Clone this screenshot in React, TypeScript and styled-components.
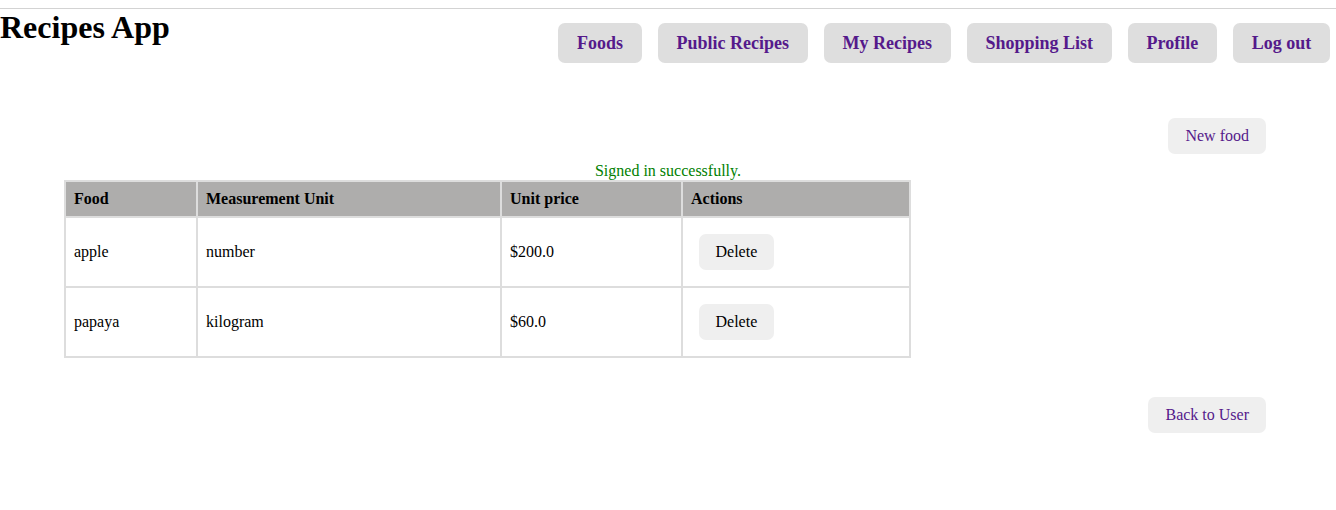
import styled, { createGlobalStyle } from 'styled-components';

const GlobalStyle = createGlobalStyle`
  body {
    margin: 0;
    font-family: 'Liberation Serif', 'Times New Roman', serif;
    font-size: 16px;
    color: #000;
    background: #fff;
  }
`;

const Header = styled.header`
  margin-top: 8px;
  border-top: 1px solid #d3d3d3;
  display: flex;
  justify-content: space-between;
  align-items: flex-start;
`;

const Title = styled.h1`
  margin: 0;
  font-size: 32px;
  font-weight: bold;
`;

const Nav = styled.nav`
  display: flex;
  gap: 16px;
  padding: 14px 6px 0 0;
`;

const NavLink = styled.a`
  display: flex;
  align-items: center;
  height: 40px;
  padding: 0 18.75px;
  border-radius: 7px;
  background: #dedede;
  color: #551a8b;
  font-size: 18px;
  font-weight: bold;
  text-decoration: none;
`;

const Main = styled.main`
  padding: 55px 70px 0 64px;
  display: flex;
  flex-direction: column;
`;

const ActionRow = styled.div`
  display: flex;
  justify-content: flex-end;
  margin-top: ${p => p.$top || 0}px;
`;

const LinkButton = styled.a`
  display: flex;
  align-items: center;
  height: 36px;
  padding: 0 17px;
  border-radius: 7px;
  background: #efefef;
  color: #551a8b;
  text-decoration: none;
`;

const Notice = styled.p`
  margin: 8px -70px 0 -64px;
  text-align: center;
  color: #008000;
  line-height: 18px;
`;

const Table = styled.table`
  width: 847px;
  table-layout: fixed;
  border-collapse: collapse;
  border: 2px solid #dddddd;
`;

const HeadCell = styled.th`
  background: #aeadac;
  border: 2px solid #dddddd;
  padding: 8px 8px;
  text-align: left;
  font-weight: bold;
  line-height: 18px;
`;

const Cell = styled.td`
  border: 2px solid #dddddd;
  padding: 16px 8px;
  line-height: 18px;
  height: 36px;
`;

const DeleteButton = styled.button`
  height: 36px;
  margin-left: 8px;
  padding: 0 16.5px;
  border: none;
  border-radius: 7px;
  background: #efefef;
  font-family: inherit;
  font-size: 16px;
  color: #000;
`;

const foods = [
  { name: 'apple', unit: 'number', price: '$200.0' },
  { name: 'papaya', unit: 'kilogram', price: '$60.0' },
];

const navItems = ['Foods', 'Public Recipes', 'My Recipes', 'Shopping List', 'Profile', 'Log out'];

export default function App() {
  return (
    <>
      <GlobalStyle />
      <Header>
        <Title>Recipes App</Title>
        <Nav>
          {navItems.map(item => (
            <NavLink key={item} href='#'>
              {item}
            </NavLink>
          ))}
        </Nav>
      </Header>
      <Main>
        <ActionRow>
          <LinkButton href='#'>New food</LinkButton>
        </ActionRow>
        <Notice>Signed in successfully.</Notice>
        <Table>
          <colgroup>
            <col style={{ width: 132 }} />
            <col style={{ width: 304 }} />
            <col style={{ width: 181 }} />
            <col style={{ width: 228 }} />
          </colgroup>
          <thead>
            <tr>
              <HeadCell>Food</HeadCell>
              <HeadCell>Measurement Unit</HeadCell>
              <HeadCell>Unit price</HeadCell>
              <HeadCell>Actions</HeadCell>
            </tr>
          </thead>
          <tbody>
            {foods.map(f => (
              <tr key={f.name}>
                <Cell>{f.name}</Cell>
                <Cell>{f.unit}</Cell>
                <Cell>{f.price}</Cell>
                <Cell>
                  <DeleteButton>Delete</DeleteButton>
                </Cell>
              </tr>
            ))}
          </tbody>
        </Table>
        <ActionRow $top={39}>
          <LinkButton href='#'>Back to User</LinkButton>
        </ActionRow>
      </Main>
    </>
  );
}
